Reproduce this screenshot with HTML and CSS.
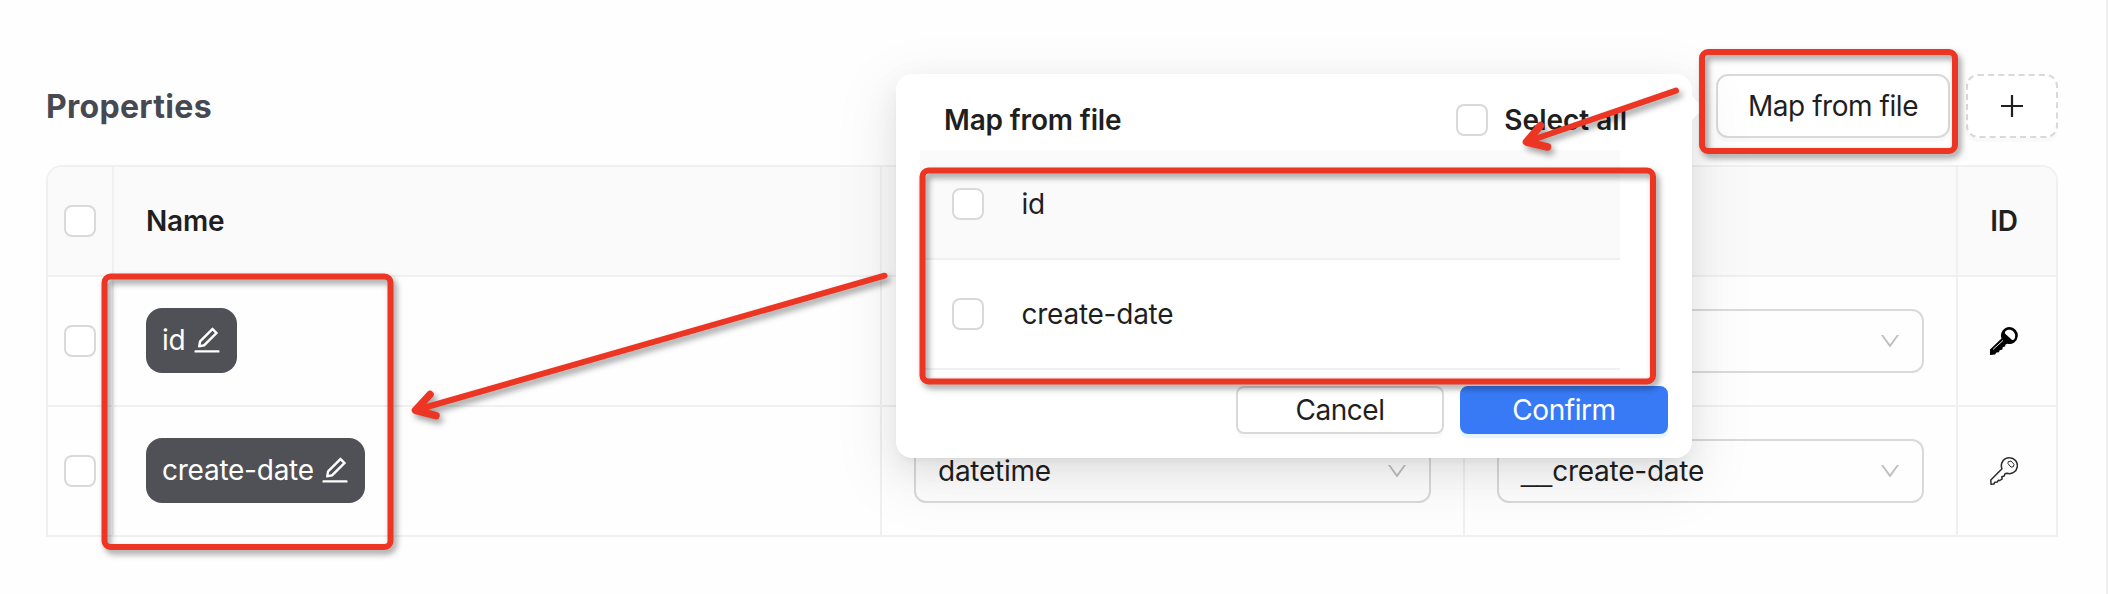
FILE: index.html
```html
<!DOCTYPE html>
<html lang="en">
<head>
<meta charset="utf-8">
<title>Properties</title>
<link rel="stylesheet" href="styles.css">
</head>
<body>
<svg class="defs" width="0" height="0" aria-hidden="true">
  <symbol id="edit" viewBox="0 0 1024 1024"><path fill="currentColor" d="M257.700 752c2 0 4-.2 6-.5L431.900 722c2-.4 3.900-1.300 5.300-2.800l423.900-423.900a9.960 9.960 0 000-14.100L694.900 114.900c-1.900-1.900-4.400-2.900-7.100-2.900s-5.200 1-7.100 2.900L256.800 538.800c-1.500 1.500-2.400 3.300-2.800 5.300l-29.500 168.200a33.500 33.500 0 009.400 29.800c6.600 6.400 14.900 9.900 23.800 9.900zm67.400-174.400L687.800 215l73.300 73.300-362.700 362.600-88.900 15.700 15.600-89zM880 836H144c-17.700 0-32 14.300-32 32v36c0 4.400 3.600 8 8 8h784c4.400 0 8-3.600 8-8v-36c0-17.700-14.300-32-32-32z"/></symbol>
  <symbol id="down" viewBox="0 0 1024 1024"><path fill="currentColor" d="M884 256h-75c-5.100 0-9.900 2.500-12.900 6.600L512 654.200 227.900 262.600c-3-4.100-7.800-6.600-12.900-6.600h-75c-6.500 0-10.300 7.400-6.500 12.700l352.600 486.100c12.800 17.600 39 17.600 51.700 0l352.600-486.100c3.900-5.300.1-12.700-6.400-12.700z"/></symbol>
</svg>
<div class="page">
  <header class="head">
    <h1 class="title">Properties</h1>
    <div class="actions">
      <button class="btn btn-map">Map from file</button>
      <button class="btn btn-add" aria-label="Add"><svg width="24" height="24" viewBox="0 0 24 24"><path d="M12 1v22M1 12h22" stroke="#1f1f1f" stroke-width="2.200"/></svg></button>
    </div>
  </header>
  <div class="table">
    <div class="row row-head">
      <div class="cell check"><span class="box"></span></div>
      <div class="cell name"><b>Name</b></div>
      <div class="cell"></div>
      <div class="cell"></div>
      <div class="cell key"><b>ID</b></div>
    </div>
    <div class="row">
      <div class="cell check"><span class="box"></span></div>
      <div class="cell name"><span class="tag tag-id"><span>id</span><svg class="edit"><use href="#edit"/></svg></span></div>
      <div class="cell"><div class="select"><span></span><svg class="down"><use href="#down"/></svg></div></div>
      <div class="cell"><div class="select"><span></span><svg class="down"><use href="#down"/></svg></div></div>
      <div class="cell key"><svg width="28" height="28" viewBox="0 0 28 28"><path fill="#000" fill-rule="evenodd" d="M19.500 0a8.500 8.500 0 1 1-2 16.800l-2 .6-.5 2-2.300.8-.3 2.200-2.700.8-.8 2-2.400.3-1.500 2-5 .5V22.500L11.500 11.500A8.500 8.500 0 0 1 19.500 0zM15.300 4.500c-.8 1.300-.3 2.200.7 3l5.500 5c1 .9 2 .8 2.700-.2 1.600-2.700 1.200-5.600-.7-7.600-2.300-2.400-6.400-2.500-8.200-.2z"/><path d="M3 22.500L13 13.500" stroke="#fff" stroke-width=".9"/></svg></div>
    </div>
    <div class="row">
      <div class="cell check"><span class="box"></span></div>
      <div class="cell name"><span class="tag tag-date"><span>create-date</span><svg class="edit"><use href="#edit"/></svg></span></div>
      <div class="cell"><div class="select"><span>datetime</span><svg class="down"><use href="#down"/></svg></div></div>
      <div class="cell"><div class="select"><span><span class="under">__</span>create-date</span><svg class="down"><use href="#down"/></svg></div></div>
      <div class="cell key"><svg width="28" height="28" viewBox="0 0 28 28" fill="none" stroke="#2b2b2b" stroke-width="1.500" stroke-linejoin="round"><path d="M19.500.8a7.900 7.900 0 1 1-2.500 15.400l-2 .5-.8 2.300-2.400.8.400 2-2.400 1.700-1.600-.2-.8 1.700-2.600.3-1 1.700-2.800.2L.8 23 12 11.800A7.900 7.900 0 0 1 19.500.8z"/><path d="M18.200 4.700l2.800-.7 3 3.300-.6 2.400-2.400.4-3-3.400z" stroke-width="1"/></svg></div>
    </div>
  </div>
</div>

<section class="popover">
  <div class="pop-head">
    <b>Map from file</b>
    <label class="all"><span class="box"></span><b>Select all</b></label>
  </div>
  <div class="list">
    <div class="item hover"><span class="box"></span><span>id</span></div>
    <div class="item"><span class="box"></span><span>create-date</span></div>
  </div>
  <div class="foot">
    <button class="small">Cancel</button>
    <button class="small primary">Confirm</button>
  </div>
</section>

<svg class="marks" width="2108" height="594" viewBox="0 0 2108 594" fill="none" stroke="#ec3623" stroke-width="6" stroke-linecap="round" stroke-linejoin="round">
  <rect x="104.500" y="276.500" width="286" height="270.500" rx="6"/>
  <rect x="922.500" y="170.500" width="730.500" height="211" rx="6"/>
  <rect x="1702" y="52" width="253" height="99" rx="6"/>
  <path d="M884.500 275.700L418 409.500"/><path stroke-width="7.500" d="M430 394.500L415.500 410.300L436 415.700"/>
  <path d="M1676 90.700L1529 141"/><path stroke-width="7.500" d="M1540.500 125.500L1526.500 142L1547.500 147"/>
</svg>
</body>
</html>
```
FILE: styles.css
```css
* { box-sizing: border-box; }
body {
  margin: 0;
  width: 2108px;
  height: 594px;
  overflow: hidden;
  position: relative;
  background: #fefefe;
  color: #1f1f1f;
  font: 28px/44px Inter, "Noto Sans", sans-serif;
  letter-spacing: -.25px;
}
b { font-weight: 600; letter-spacing: -.15px; }
.defs { position: absolute; }
.page {
  height: 594px;
  padding: 74px 48px 0 46px;
  border-right: 2px solid #f0f0f0;
}
.head { display: flex; justify-content: space-between; height: 64px; margin-bottom: 27px; }
.title { margin: 0; padding-top: 1px; font-size: 32px; line-height: 64px; font-weight: 700; letter-spacing: .3px; color: #474952; }
.actions { display: flex; gap: 16px; }
button { font: inherit; color: inherit; padding: 0; white-space: nowrap; letter-spacing: -.45px; }
.btn {
  display: flex;
  align-items: center;
  justify-content: center;
  height: 64px;
  border: 2px solid #d9d9d9;
  border-radius: 12px;
  background: #fff;
  box-shadow: 0 4px 0 rgba(0, 0, 0, .02);
}
.btn-map { width: 234px; }
.btn-add { width: 92px; border-style: dashed; }

.table {
  width: 2012px;
  border: 2px solid #f0f0f0;
  border-radius: 16px 16px 0 0;
  overflow: hidden;
}
.row {
  display: grid;
  grid-template-columns: 66px 768px 583px 493px 98px;
  height: 130px;
  border-bottom: 2px solid #f0f0f0;
}
.row:last-child { height: 128px; border-bottom: 0; }
.row-head { height: 110px; background: #fafafa; }
.cell { display: flex; align-items: center; padding: 0 32px; border-right: 2px solid #f0f0f0; }
.cell:last-child { border-right: 0; }
.cell.check { padding: 0; justify-content: center; }
.cell.key { padding: 0 6px 0 0; justify-content: center; }
.box { flex: none; width: 32px; height: 32px; border: 2px solid #d9d9d9; border-radius: 8px; background: #fff; }
.tag {
  display: flex;
  align-items: center;
  justify-content: space-between;
  height: 65px;
  margin-bottom: 2px;
  padding: 0 16px;
  border-radius: 16px;
  background: #505156;
  color: #fff;
}
.tag-id { width: 91px; }
.tag-date { width: 219px; }
.edit { flex: none; width: 32px; height: 32px; margin: 0 -2px 0 0; }
.select {
  display: flex;
  align-items: center;
  justify-content: space-between;
  width: 100%;
  height: 64px;
  padding: 0 20px 0 22px;
  border: 2px solid #d9d9d9;
  border-radius: 12px;
}
.under { font-family: "Liberation Sans", sans-serif; letter-spacing: 0; }
.down { width: 24px; height: 24px; color: #bfbfbf; }

.popover {
  position: absolute;
  left: 896px;
  top: 74px;
  width: 796px;
  height: 384px;
  padding: 24px;
  border-radius: 16px;
  background: #fff;
  box-shadow: 0 12px 32px rgba(0, 0, 0, .08), 0 6px 12px -8px rgba(0, 0, 0, .12), 0 18px 56px 16px rgba(0, 0, 0, .05);
}
.popover::after {
  content: "";
  position: absolute;
  right: -7px;
  top: 22px;
  width: 24px;
  height: 24px;
  border-radius: 0 4px 0 0;
  background: #fff;
  transform: rotate(45deg);
}
.pop-head { display: flex; justify-content: space-between; padding: 0 41px 8px 24px; }
.all { display: flex; align-items: center; gap: 16px; }
.all b { letter-spacing: 0; }
.list { width: 700px; height: 220px; }
.item { display: flex; align-items: center; gap: 37.500px; height: 110px; padding: 0 32px; border-bottom: 2px solid #f0f0f0; }
.hover { background: #fafafa; }
.foot { display: flex; justify-content: flex-end; gap: 16px; padding-top: 16px; }
.small {
  width: 208px;
  height: 48px;
  line-height: 44px;
  border: 2px solid #d9d9d9;
  border-radius: 8px;
  background: #fff;
  box-shadow: 0 4px 0 rgba(0, 0, 0, .02);
}
.primary { border-color: #387af6; background: #387af6; color: #fff; box-shadow: 0 4px 0 rgba(5, 145, 255, .1); }
.marks { position: absolute; left: 0; top: 0; pointer-events: none; filter: drop-shadow(3px 4px 3px rgba(0, 0, 0, .4)); }
```
